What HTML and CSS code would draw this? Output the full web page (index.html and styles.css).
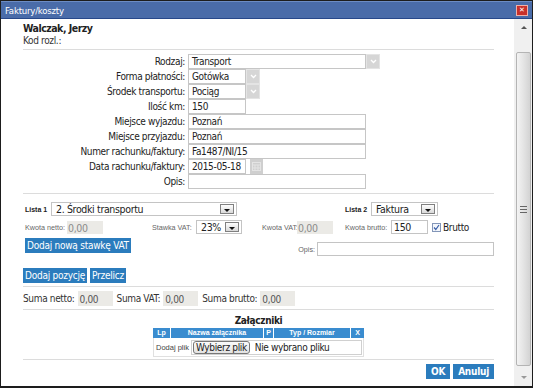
FILE: index.html
```html
<!DOCTYPE html>
<html lang="pl">
<head>
    <meta charset="UTF-8">
    <title>Faktury/koszty</title>
    <link rel="stylesheet" href="styles.css">
</head>
<body>
    <div class="window">
        <div class="titlebar">
            <span class="title">Faktury/koszty</span>
            <span class="close">&#x2715;</span>
        </div>
        <div class="body">
            <div class="content">
                <div class="person">
                    <div class="name">Walczak, Jerzy</div>
                    <div class="code">Kod rozl.:</div>
                </div>
                <div class="sep"></div>

                <div class="form">
                    <label>Rodzaj:</label>
                    <div class="field"><span class="box wide">Transport</span><span class="ddbtn"><svg width="7" height="5" viewBox="0 0 7 5"><path d="M1 1l2.5 2.5L6 1" fill="none" stroke="#fff" stroke-width="1.3"/></svg></span></div>
                    <label>Forma płatności:</label>
                    <div class="field"><span class="box short">Gotówka</span><span class="ddbtn"><svg width="7" height="5" viewBox="0 0 7 5"><path d="M1 1l2.5 2.5L6 1" fill="none" stroke="#fff" stroke-width="1.3"/></svg></span></div>
                    <label>Środek transportu:</label>
                    <div class="field"><span class="box short">Pociąg</span><span class="ddbtn"><svg width="7" height="5" viewBox="0 0 7 5"><path d="M1 1l2.5 2.5L6 1" fill="none" stroke="#fff" stroke-width="1.3"/></svg></span></div>
                    <label>Ilość km:</label>
                    <div class="field"><span class="box short">150</span></div>
                    <label>Miejsce wyjazdu:</label>
                    <div class="field"><span class="box wide2">Poznań</span></div>
                    <label>Miejsce przyjazdu:</label>
                    <div class="field"><span class="box wide2">Poznań</span></div>
                    <label>Numer rachunku/faktury:</label>
                    <div class="field"><span class="box wide2">Fa1487/NI/15</span></div>
                    <label>Data rachunku/faktury:</label>
                    <div class="field"><span class="box short">2015-05-18</span><span class="cal"><svg width="9" height="9" viewBox="0 0 9 9"><rect x="0.5" y="0.5" width="8" height="8" fill="none" stroke="#e4e4e4"/><path d="M0 3h9M3 3v6M6 3v6M0 6h9" stroke="#e4e4e4"/></svg></span></div>
                    <label>Opis:</label>
                    <div class="field"><span class="box wide2"></span></div>
                </div>
                <div class="sep sep-form"></div>

                <div class="lists">
                    <div class="cell span3">
                        <span class="tiny bold">Lista 1</span>
                        <span class="select sel-list1">2. Środki transportu<span class="winbtn"></span></span>
                    </div>
                    <div class="cell">
                        <span class="tiny bold">Lista 2</span>
                        <span class="select sel-list2">Faktura<span class="winbtn"></span></span>
                    </div>

                    <div class="cell">
                        <span class="tiny lbl-netto">Kwota netto:</span>
                        <span class="ro">0,00</span>
                    </div>
                    <div class="cell">
                        <span class="tiny lbl-stawka">Stawka VAT:</span>
                        <span class="select sel-vat">23%<span class="winbtn"></span></span>
                    </div>
                    <div class="cell">
                        <span class="tiny lbl-kvat">Kwota VAT:</span>
                        <span class="ro">0,00</span>
                    </div>
                    <div class="cell">
                        <span class="tiny lbl-brutto">Kwota brutto:</span>
                        <span class="edit">150</span>
                        <span class="check"><svg width="7" height="7" viewBox="0 0 7 7"><path d="M1 3.5l1.8 2L6 1" fill="none" stroke="#3a5fa8" stroke-width="1.2"/></svg></span>
                        <span class="chk-label">Brutto</span>
                    </div>

                    <div class="cell span2 top">
                        <span class="btn">Dodaj nową stawkę VAT</span>
                    </div>
                    <div class="cell span2 opis">
                        <span class="tiny">Opis:</span>
                        <span class="edit opis-in"></span>
                    </div>
                </div>

                <div class="actions">
                    <span class="btn">Dodaj pozycję</span>
                    <span class="btn">Przelicz</span>
                </div>
                <div class="sep"></div>

                <div class="sums">
                    <span class="sum-label">Suma netto:</span><span class="sum">0,00</span>
                    <span class="sum-label">Suma VAT:</span><span class="sum">0,00</span>
                    <span class="sum-label">Suma brutto:</span><span class="sum">0,00</span>
                </div>
                <div class="sep"></div>

                <div class="attach">
                    <div class="attach-title">Załączniki</div>
                    <div class="att-table">
                        <div class="att-head">
                            <span class="c-lp">Lp</span>
                            <span class="c-name">Nazwa załącznika</span>
                            <span class="c-p">P</span>
                            <span class="c-type">Typ / Rozmiar</span>
                            <span class="c-x">X</span>
                        </div>
                        <div class="att-row">
                            <span class="add-label">Dodaj plik</span>
                            <div class="file"><span class="file-btn">Wybierz plik</span><span class="file-text">Nie wybrano pliku</span></div>
                        </div>
                    </div>
                </div>
                <div class="sep sep-att"></div>

                <div class="footer">
                    <span class="btn bold">OK</span>
                    <span class="btn bold">Anuluj</span>
                </div>
            </div>

            <div class="scrollbar">
                <div class="arrow up"></div>
                <div class="thumb"><span class="grip"></span></div>
                <div class="arrow down"></div>
            </div>
        </div>
    </div>
</body>
</html>
```

FILE: styles.css
```css
* {
    margin: 0;
    padding: 0;
    box-sizing: border-box;
}

body {
    font-family: "DejaVu Sans Condensed", "DejaVu Sans", sans-serif;
    font-size: 10px;
    letter-spacing: -0.35px;
    color: #222;
    background: #fff;
}

.window {
    width: 533px;
    height: 388px;
    border: 1px solid #1d1d1d;
    border-bottom-width: 2px;
    display: flex;
    flex-direction: column;
    overflow: hidden;
}

.titlebar {
    height: 18px;
    flex: none;
    background: #4a6ca9;
    border-top: 1px solid #6c8cc4;
    border-bottom: 1px solid #27488a;
    display: flex;
    align-items: center;
    justify-content: space-between;
    padding: 0 4px 0 4px;
}

.title {
    color: #fff;
    font-size: 9.5px;
    letter-spacing: -0.2px;
}

.close {
    width: 12px;
    height: 11px;
    background: #c8302a;
    border: 1px solid #f0b0a8;
    color: #fff;
    font-family: "DejaVu Sans", sans-serif;
    font-size: 7px;
    font-weight: bold;
    line-height: 9px;
    text-align: center;
    letter-spacing: 0;
}

.body {
    flex: 1;
    display: flex;
    min-height: 0;
}

.content {
    flex: 1;
    padding: 3px 20px 0 22px;
}

.person .name {
    font-weight: bold;
    font-size: 10.5px;
    letter-spacing: -0.5px;
    line-height: 13px;
}

.person .code {
    font-size: 10px;
    line-height: 11px;
    color: #333;
}

.sep {
    border-top: 1px solid #dcdcdc;
    margin: 3px 0 4px 0;
}

.sep-form {
    margin: 4px 0 8px 0;
}

.sep-att {
    margin: 2px 0 4px 0;
}

/* main form */
.form {
    display: grid;
    grid-template-columns: 165px 1fr;
    grid-auto-rows: 15px;
}

.form label {
    text-align: right;
    padding-right: 3px;
    line-height: 15px;
    color: #222;
}

.field {
    display: flex;
    align-items: stretch;
}

.box {
    display: block;
    height: 15px;
    border: 1px solid #c6c6c6;
    padding: 0 3px;
    line-height: 13px;
    white-space: nowrap;
    overflow: hidden;
}

.box.wide { width: 178px; }
.box.wide2 { width: 178px; }
.box.short { width: 58px; }

.ddbtn {
    width: 14px;
    height: 15px;
    background: #d6d6d6;
    border: 1px solid #e4e4e4;
    display: flex;
    align-items: center;
    justify-content: center;
}

.cal {
    width: 13px;
    height: 15px;
    margin-left: 4px;
    background: #cfcfcf;
    display: flex;
    align-items: center;
    justify-content: center;
}

/* lists */
.lists {
    display: grid;
    grid-template-columns: 127px 110px 83px 1fr;
    grid-template-rows: 14px 14px 18px;
    row-gap: 4px;
    padding-left: 2px;
}

.cell {
    display: flex;
    align-items: center;
    white-space: nowrap;
}

.span3 { grid-column: span 3; }
.span2 { grid-column: span 2; }

.cell.top {
    align-items: flex-start;
}

.tiny {
    font-family: "Liberation Sans", Arial, sans-serif;
    font-size: 7.2px;
    letter-spacing: 0;
    color: #666;
}

.tiny.bold {
    font-size: 7px;
    font-weight: bold;
    color: #222;
    width: 26px;
}

.bold {
    font-weight: bold;
}

.select {
    position: relative;
    height: 14px;
    border: 1px solid #c4c4c4;
    font-size: 10.5px;
    line-height: 12px;
    padding-left: 4px;
}

.sel-list1 { width: 186px; }
.sel-list2 { width: 67px; }
.sel-vat { width: 46px; }

.winbtn {
    position: absolute;
    right: 2px;
    top: 1px;
    width: 14px;
    height: 10px;
    border: 1px solid #808080;
    background: linear-gradient(#fdfdfd, #d9d9d9);
}

.winbtn::after {
    content: "";
    position: absolute;
    left: 3px;
    bottom: 1px;
    border-left: 3px solid transparent;
    border-right: 3px solid transparent;
    border-top: 3px solid #111;
}

.lbl-netto { width: 42px; }
.lbl-stawka { width: 44px; }
.lbl-kvat { width: 35px; }
.lbl-brutto { width: 46px; }

.ro {
    width: 36px;
    height: 13px;
    background: #ebeae6;
    color: #8a8a8a;
    font-size: 10.5px;
    line-height: 14px;
    padding-left: 1px;
}

.edit {
    width: 37px;
    height: 14px;
    border: 1px solid #c4c4c4;
    font-size: 10.5px;
    line-height: 12px;
    padding-left: 2px;
}

.check {
    width: 9px;
    height: 9px;
    margin-left: 4px;
    border: 1px solid #8396b8;
    background: #f3f6fb;
    display: flex;
    align-items: center;
    justify-content: center;
}

.chk-label {
    margin-left: 2px;
}

.opis {
    justify-content: flex-end;
    align-self: end;
}

.opis .tiny {
    margin-right: 2px;
}

.opis-in {
    width: 177px;
    height: 14px;
}

.btn {
    display: inline-block;
    background: #2b7cbd;
    color: #fff;
    font-size: 10px;
    letter-spacing: -0.25px;
    line-height: 15px;
    height: 15px;
    padding: 0 2px;
}

.btn.bold {
    font-weight: bold;
}

.actions {
    display: flex;
    gap: 3px;
    margin-top: 12px;
}

.sums {
    display: flex;
    align-items: center;
    height: 15px;
}

.sum-label {
    color: #333;
    margin-right: 3px;
}

.sum {
    width: 35px;
    height: 15px;
    background: #ebeae6;
    color: #555;
    line-height: 17px;
    padding-left: 2px;
    margin-right: 4px;
}

/* attachments */
.attach-title {
    text-align: center;
    font-weight: bold;
    line-height: 13px;
    margin-top: 3px;
}

.att-table {
    margin: 1px auto 0;
    width: 211px;
}

.att-head {
    display: flex;
    height: 10px;
    background: #3a8ccf;
    color: #fff;
    font-family: "Liberation Sans", Arial, sans-serif;
    font-size: 7px;
    letter-spacing: 0;
    font-weight: bold;
    line-height: 10px;
}

.att-head span {
    text-align: center;
    border-left: 1px solid #fff;
}

.att-head span:first-child { border-left: none; }

.c-lp { width: 17px; }
.c-name { width: 93px; }
.c-p { width: 10px; }
.c-type { width: 77px; }
.c-x { flex: 1; }

.att-row {
    display: flex;
    align-items: center;
    height: 19px;
    border: 1px solid #e0e0e0;
    border-top: none;
    padding-right: 1px;
}

.add-label {
    font-family: "Liberation Sans", Arial, sans-serif;
    font-size: 7.5px;
    letter-spacing: 0;
    color: #444;
    white-space: nowrap;
    padding-left: 2px;
    width: 37px;
}

.file {
    flex: 1;
    display: flex;
    align-items: center;
    height: 15px;
    border: 1px solid #d0d0d0;
}

.file-btn {
    line-height: 11px;
    border: 1px solid #777;
    border-radius: 3px;
    background: linear-gradient(#fafafa, #e2e2e2);
    padding: 0 2px;
    margin-left: 1px;
}

.file-text {
    margin-left: 5px;
}

.footer {
    display: flex;
    justify-content: flex-end;
    gap: 3px;
}

.footer .btn {
    padding: 0 5px;
}

/* scrollbar */
.scrollbar {
    width: 18px;
    background: #f0f0f0;
    display: flex;
    flex-direction: column;
    align-items: center;
    padding: 0 1px 0 2px;
}

.arrow {
    height: 17px;
    width: 100%;
    position: relative;
}

.arrow::after {
    content: "";
    position: absolute;
    left: 5px;
    top: 7px;
    border-left: 3px solid transparent;
    border-right: 3px solid transparent;
}

.arrow.up::after { border-bottom: 3px solid #555; }
.arrow.down::after { border-top: 3px solid #999; }

.thumb {
    flex: 1;
    width: 15px;
    margin: 16px 0 3px;
    border: 1px solid #b4b4b4;
    border-radius: 2px;
    background: linear-gradient(90deg, #f3f3f3, #e4e4e4 50%, #d3d3d3);
    display: flex;
    align-items: center;
    justify-content: center;
}

.grip {
    width: 7px;
    height: 7px;
    border-top: 1px solid #666;
    border-bottom: 1px solid #666;
    position: relative;
}

.grip::after {
    content: "";
    position: absolute;
    left: 0;
    right: 0;
    top: 2px;
    border-top: 1px solid #666;
}
```
